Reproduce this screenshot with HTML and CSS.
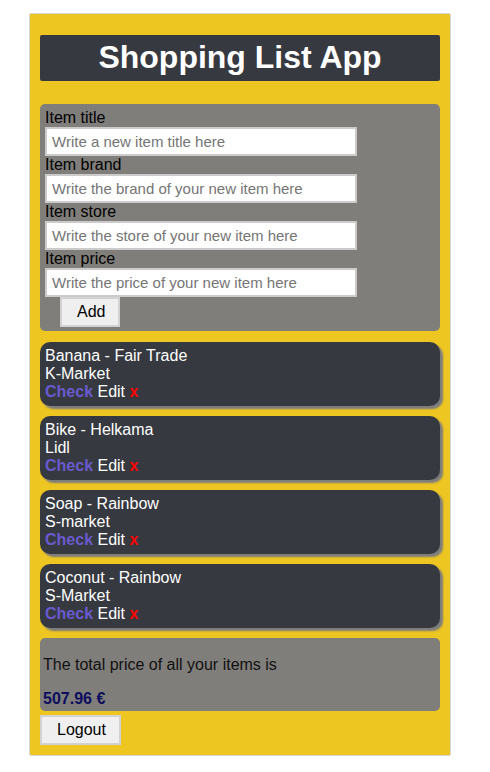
FILE: index.html
```html
<!DOCTYPE html>
<html lang="en">
<head>
<meta charset="utf-8">
<title>Shopping List App</title>
<link rel="stylesheet" href="styles.css">
</head>
<body>
<div class="app">
  <h1 class="title">Shopping List App</h1>
  <form class="form-panel">
    <label class="field-label">Item title</label>
    <input class="field-input" type="text" placeholder="Write a new item title here">
    <label class="field-label">Item brand</label>
    <input class="field-input" type="text" placeholder="Write the brand of your new item here">
    <label class="field-label">Item store</label>
    <input class="field-input" type="text" placeholder="Write the store of your new item here">
    <label class="field-label">Item price</label>
    <input class="field-input" type="text" placeholder="Write the price of your new item here">
    <button class="btn add-btn" type="button">Add</button>
  </form>
  <ul class="items">
    <li class="item">
      <div>Banana - Fair Trade</div>
      <div>K-Market</div>
      <div><span class="check">Check</span> <span class="edit">Edit</span> <span class="remove">x</span></div>
    </li>
    <li class="item">
      <div>Bike - Helkama</div>
      <div>Lidl</div>
      <div><span class="check">Check</span> <span class="edit">Edit</span> <span class="remove">x</span></div>
    </li>
    <li class="item">
      <div>Soap - Rainbow</div>
      <div>S-market</div>
      <div><span class="check">Check</span> <span class="edit">Edit</span> <span class="remove">x</span></div>
    </li>
    <li class="item">
      <div>Coconut - Rainbow</div>
      <div>S-Market</div>
      <div><span class="check">Check</span> <span class="edit">Edit</span> <span class="remove">x</span></div>
    </li>
  </ul>
  <div class="total">
    <p class="total-text">The total price of all your items is</p>
    <p class="total-sum">507.96 €</p>
  </div>
  <button class="btn logout-btn" type="button">Logout</button>
</div>
</body>
</html>
```

FILE: styles.css
```css
html, body {
  margin: 0;
  padding: 0;
  background: #ffffff;
}

body {
  font-family: "Liberation Sans", Arial, sans-serif;
  font-size: 16px;
  color: #000;
}

.app {
  box-sizing: border-box;
  width: 422px;
  margin: 13px 0 0 29px;
  padding: 0 10px 10px;
  background: #eec621;
  border: 1px solid #d6d6d6;
  border-radius: 2px;
  display: flex;
  flex-direction: column;
  align-items: flex-start;
}

.title {
  align-self: stretch;
  margin: 21px 0 23px;
  padding: 4px 0 5px;
  background: #363940;
  color: #ffffff;
  font-size: 32px;
  font-weight: bold;
  text-align: center;
  border-radius: 2px;
  line-height: 37px;
}

.form-panel {
  align-self: stretch;
  display: flex;
  flex-direction: column;
  align-items: flex-start;
  margin: 0;
  padding: 5px 5px 4px;
  background: #807e7b;
  border-radius: 5px;
}

.field-label {
  display: block;
  line-height: 18px;
}

.field-input {
  box-sizing: border-box;
  width: 312px;
  height: 29px;
  margin: 0;
  padding: 4px 5px;
  border: 2px solid #cbcbcb;
  background: #ffffff;
  font-family: "Liberation Sans", Arial, sans-serif;
  font-size: 15px;
  color: #000;
}

.field-input::placeholder {
  color: #757575;
}

.btn {
  box-sizing: border-box;
  height: 30px;
  margin: 0;
  padding: 0 15px;
  background: #efefef;
  border: 2px solid #d2d2d2;
  font-family: "Liberation Sans", Arial, sans-serif;
  font-size: 16px;
  color: #000;
}

.add-btn {
  width: 60px;
  margin-left: 15px;
}

.items {
  align-self: stretch;
  list-style: none;
  margin: 11px 0 0;
  padding: 0;
  display: flex;
  flex-direction: column;
  gap: 10px;
}

.item {
  padding: 5px 5px 5px;
  background: #363940;
  color: #ffffff;
  border-radius: 10px;
  box-shadow: 3px 3px 2px #7c7c7c;
  line-height: 18px;
}

.check {
  color: #6a5acd;
  font-weight: bold;
}

.edit {
  color: #ffffff;
}

.remove {
  color: #ff0000;
  font-weight: bold;
}

.total {
  align-self: stretch;
  margin-top: 10px;
  padding: 2px 3px 3px;
  background: #807e7b;
  border-radius: 5px;
}

.total-text {
  margin: 16px 0 16px;
  line-height: 18px;
  color: #111;
}

.total-sum {
  margin: 0;
  line-height: 18px;
  font-weight: bold;
  color: #0d0d5e;
}

.logout-btn {
  width: 81px;
  margin-top: 4px;
}
```
